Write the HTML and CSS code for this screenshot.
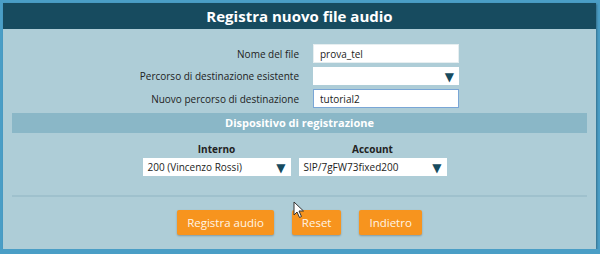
FILE: index.html
```html
<!DOCTYPE html>
<html lang="it">
<head>
  <meta charset="UTF-8" />
  <title>Registra nuovo file audio</title>
  <link rel="stylesheet" href="styles.css">
</head>
<body>
  <div class="panel">
    <h1 class="title">Registra nuovo file audio</h1>

    <div class="form">
      <label class="lbl" for="nome">Nome del file</label>
      <input class="field" id="nome" type="text" value="prova_tel">

      <label class="lbl">Percorso di destinazione esistente</label>
      <div class="select"><span></span><span class="arrow">&#9660;</span></div>

      <label class="lbl" for="nuovo">Nuovo percorso di destinazione</label>
      <input class="field focus" id="nuovo" type="text" value="tutorial2">
    </div>

    <h2 class="section">Dispositivo di registrazione</h2>

    <div class="device">
      <div class="col">
        <div class="col-title">Interno</div>
        <div class="select"><span>200 (Vincenzo Rossi)</span><span class="arrow">&#9660;</span></div>
      </div>
      <div class="col">
        <div class="col-title">Account</div>
        <div class="select"><span>SIP/7gFW73fixed200</span><span class="arrow">&#9660;</span></div>
      </div>
    </div>

    <hr class="divider">

    <div class="buttons">
      <button class="btn">Registra audio</button>
      <button class="btn">Reset</button>
      <button class="btn">Indietro</button>
    </div>

    <svg class="cursor" width="12" height="18" viewBox="0 0 12 18">
      <path d="M1 1 L1 14 L4 11 L6.5 16.5 L8.5 15.5 L6 10 L10.5 10 Z" fill="#fff" stroke="#333" stroke-width="1"/>
    </svg>
  </div>
</body>
</html>
```

FILE: styles.css
```css
body {
  margin: 0;
  background-color: #4a9ec6;
  font-family: "Open Sans", "DejaVu Sans", sans-serif;
  color: #222;
}
.panel {
  position: relative;
  margin: 3px 4px 0 3px;
  height: 246px;
  background: #aecdd7;
  box-shadow: 1px 1px 2px rgba(0,0,0,0.3);
}
.title {
  margin: 0;
  height: 26px;
  line-height: 26px;
  background: #174b5f;
  color: #fff;
  font-size: 15px;
  font-weight: bold;
  text-align: center;
}
.form {
  display: grid;
  grid-template-columns: 296px 146px;
  column-gap: 14px;
  row-gap: 4px;
  align-items: center;
  padding-top: 15px;
}
.lbl {
  text-align: right;
  font-size: 10px;
  color: #222;
}
.field {
  box-sizing: border-box;
  height: 19px;
  margin: 0;
  padding: 0 6px;
  border: 1px solid #e6eef0;
  background: #fff;
  font-family: inherit;
  font-size: 10px;
  color: #222;
  outline: none;
}
.field.focus {
  border-color: #7aa6d6;
}
.select {
  box-sizing: border-box;
  height: 18px;
  display: flex;
  align-items: center;
  justify-content: space-between;
  padding: 0 5px;
  background: #fff;
  font-size: 10px;
}
.arrow {
  color: #174b5f;
  font-size: 12px;
}
.section {
  margin: 5px 9px 0;
  height: 20px;
  line-height: 20px;
  background: #8ab7c7;
  color: #fff;
  font-size: 11px;
  font-weight: bold;
  text-align: center;
}
.device {
  display: flex;
  justify-content: center;
  gap: 8px;
  margin-top: 9px;
  padding-right: 10px;
}
.col {
  width: 148px;
  display: flex;
  flex-direction: column;
  gap: 2px;
}
.col-title {
  text-align: center;
  font-size: 10px;
  font-weight: bold;
}
.divider {
  margin: 19px 9px 0;
  border: none;
  border-top: 2px solid #9fc1cd;
}
.buttons {
  display: flex;
  justify-content: center;
  gap: 18px;
  margin-top: 13px;
}
.btn {
  height: 25px;
  padding: 0 10px;
  border: none;
  border-radius: 2px;
  background: #f7941e;
  color: #fff5e6;
  font-family: inherit;
  font-size: 11.5px;
  box-shadow: 0 1px 2px rgba(0,0,0,0.25);
}
.cursor {
  position: absolute;
  left: 290px;
  top: 198px;
}
```
